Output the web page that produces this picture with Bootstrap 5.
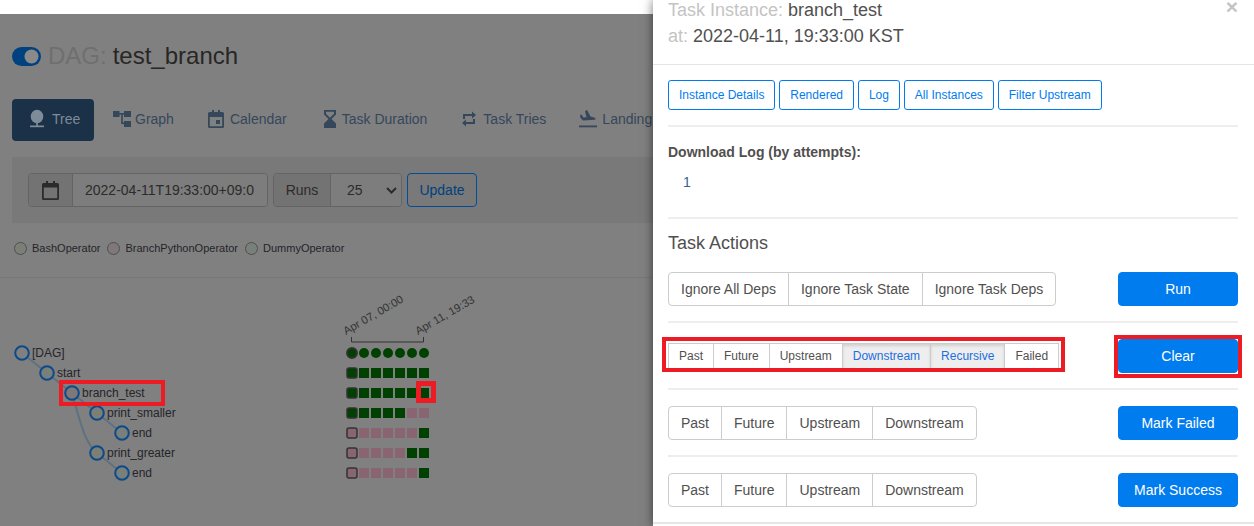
<!DOCTYPE html>
<html lang="en"><head><meta charset="utf-8"><title>test_branch</title>
<link href="https://cdn.jsdelivr.net/npm/bootstrap@5.3.0/dist/css/bootstrap.min.css" rel="stylesheet">
<style>
html,body{margin:0;height:526px;overflow:hidden;background:#fff;font-family:"Liberation Sans",Arial,sans-serif;font-size:14px;color:#51504f}
.shell{display:flex;height:526px;overflow:hidden}
.dimmed{flex:0 0 653px;width:653px;height:526px;overflow:hidden;display:flex;flex-direction:column}
.topstrip{flex:0 0 14px;background:#fff}
.pagearea{flex:1;background:#808080;padding:0 0 0 12px;color:#282726;overflow:hidden}
.dagtitle{display:flex;align-items:center;height:30px;margin:27px 0 0;font-size:24px;font-weight:400;line-height:30px;color:#282726}
.dagtitle .dim{color:#6f6f6f;margin:0 6px 0 7px}
.toggleicon{display:block;width:29px;height:19px;flex:none}
.tabsrow{display:flex;margin-top:28px;height:42px;align-items:stretch;white-space:nowrap}
.tabitem{display:flex;align-items:center;flex:none;color:#35475a;text-decoration:none;padding-bottom:2px}
.tabitem svg{display:block;margin-right:5px;flex:none}
.tabactive{width:82px;background:#1a3148;color:#7e8b98;border-radius:4px;padding-left:15px}
.tabgraph{margin-left:19px}
.tabgraph svg{margin-right:4px}
.tabcal{margin-left:34px}
.tabcal svg,.tabtries svg{margin-right:6px}
.tabdur{margin-left:36px}
.tabtries{margin-left:34px}
.tabland{margin-left:33px}
.filterbar{margin-top:16px;height:66px;background:#797979;padding:16px;display:flex;align-items:center;gap:4px}
.fgroup{display:flex;height:34px;border:1px solid #646464;border-radius:4px;overflow:hidden;color:#2c2b2a;flex:none}
.fgroup>div{display:flex;align-items:center;height:100%}
.fgroup2{margin-left:1px}
.faddon{background:#737373;border-right:1px solid #646464}
.fgroup .fcal{width:44px;justify-content:center}
.fgroup .fval{width:194px;padding-left:12px;background:#7d7d7d;overflow:hidden;white-space:nowrap}
.fgroup .fruns{width:57px;justify-content:center}
.fgroup .fsel{width:70px;padding-left:16px;background:#7d7d7d;justify-content:space-between;padding-right:4px}
.updatebtn{height:34px;width:70px;border:1px solid #014d96;border-radius:4px;background:transparent;color:#00417c;font-size:14px;padding:0;margin-left:1px}
.legendrow{display:flex;align-items:center;height:16px;margin-top:17px;font-size:11px;color:#25242a;margin-left:2px}
.legendrow i{display:block;width:13px;height:13px;border-radius:50%;border:1px solid #4f4f4f;margin-right:5px}
.legendrow span{margin-right:7px}
.pageline{height:1px;background:#787878;margin:21px 0 0 -12px}
.treesvg{display:block;margin:8px 0 0 -12px}
.taskmodal{flex:1;height:auto;border:0;border-radius:0;box-shadow:0 0 10px rgba(0,0,0,.55);background:#fff;z-index:2;position:relative;overflow:hidden;display:block}
.taskhead{display:flow-root;height:65px;padding:0 15px;border-bottom:1px solid #e5e5e5;position:relative;font-size:18px;line-height:26px;color:#51504f}
.taskhead p{margin:0}
.taskhead .t1{margin-top:-3px}
.taskhead .dim{color:#c4c4c4}
.closex{position:absolute;right:16px;top:0;font-size:21px;font-weight:700;color:#c4c4c4;line-height:13px}
.taskbody{padding:15px 16px 0 15px}
.linkbtn{font-size:12px;line-height:18px;padding:5px 10px;color:#017cee;border:1px solid #017cee;border-radius:3px;background:#fff;display:inline-block;text-decoration:none}
.thinrule{height:2px;background:#eee;margin:15px 0 0}
.dlrule{margin-top:25px}
.dlhead{font-weight:700;margin:15px 0 0;line-height:20px;font-size:14px}
.dlnum{margin:10px 0 0 15px;line-height:20px;color:#365f8c;font-size:14px}
.acthead{font-size:18px;line-height:25px;margin:12px 0 0;font-weight:400;color:#51504f}
.actrow{display:flex;justify-content:space-between;align-items:center;height:34px;margin-top:16px}
.actsep{height:2px;background:#eee;margin-top:15px}
.sgroup .btn{font-size:14px;line-height:20px;padding:6px 12px;color:#51504f;background:#fff;border:1px solid #ccc;border-radius:4px}
.sgroup.btn-group .btn:not(:first-child){margin-left:-1px}
.xgroup .btn{font-size:12px;line-height:18px;padding:3px 10px;border-radius:0}
.xgroup .btn.picked{background:#eee;color:#1d6fe0;box-shadow:inset 0 2px 3px rgba(0,0,0,.12)}
.gobtn{width:120px;height:34px;font-size:14px;line-height:20px;padding:6px 0;background:#017cee;border:1px solid #017cee;color:#fff;border-radius:4px}
.redbox{position:absolute;border:4px solid #ed1c24;pointer-events:none}
.redone{left:9px;top:337px;width:403px;height:35px}
.redtwo{left:461px;top:335px;width:128px;height:43px}
.modalfoot{height:2px;background:#e5e5e5;margin:15px -16px 0 -15px}
</style></head>
<body>
<div class="shell">
 <div class="dimmed">
  <div class="topstrip"></div>
  <div class="pagearea">
   <h3 class="dagtitle">
    <svg class="toggleicon" viewBox="0 0 29 19"><rect width="29" height="19" rx="9.5" fill="#00427f"/><circle cx="19.5" cy="9.5" r="7" fill="#8a8a8a"/></svg>
    <span class="dim">DAG:</span>test_branch</h3>
   <div class="tabsrow">
    <a class="tabitem tabactive"><svg width="20" height="20" viewBox="0 0 20 20" fill="#7e8b98"><ellipse cx="10" cy="7.5" rx="6.3" ry="6.8"/><rect x="9.2" y="12" width="1.7" height="5"/><rect x="3" y="16.5" width="14" height="1.7"/></svg>Tree</a>
    <a class="tabitem tabgraph"><svg width="18" height="18" viewBox="0 0 18 18" fill="#35475a"><rect x="0" y="1" width="6.5" height="6"/><rect x="11" y="1" width="7" height="6"/><rect x="11" y="11" width="7" height="6"/><rect x="6" y="3" width="6" height="1.6"/><rect x="8.2" y="3" width="1.6" height="11"/><rect x="8.2" y="12.5" width="4" height="1.6"/></svg>Graph</a>
    <a class="tabitem tabcal"><svg width="16" height="20" viewBox="0 0 16 20" fill="#35475a"><path d="M1.500 3H4V1h2v2h4V1h2v2h2.500A1.500 1.500 0 0 1 16 4.500v13a1.500 1.500 0 0 1-1.500 1.500h-13A1.500 1.500 0 0 1 0 17.500v-13A1.500 1.500 0 0 1 1.500 3Zm.3 5v9.200h12.400V8Z"/><rect x="8" y="11" width="4" height="4"/></svg>Calendar</a>
    <a class="tabitem tabdur"><svg width="14" height="20" viewBox="0 0 14 20" fill="#35475a"><path d="M1 1h12v4.500L8.500 10 13 14.500V19H1v-4.500L5.500 10 1 5.500Zm2 1.800v1.900L7 8.700l4-4V2.800Z"/></svg>Task Duration</a>
    <a class="tabitem tabtries"><svg width="16" height="18" viewBox="0 0 16 18" fill="#35475a"><path d="M2 4h9V1.500L15 5l-4 3.500V6H4v3H2ZM14 14H5v2.500L1 13l4-3.500V12h7V9h2Z"/></svg>Task Tries</a>
    <a class="tabitem tabland"><svg width="18" height="18" viewBox="0 0 18 18" fill="#35475a"><rect x="0" y="15.500" width="18" height="1.800"/><path d="M1 5l1.500-.5 2 3 3-.2L6 1.300 8-.1l3.500 6.700 4.300 1.200c1 .4 1 1.800-.3 2L4 10.500 1.500 8Z"/></svg>Landing</a>
   </div>
   <div class="filterbar">
    <div class="fgroup"><div class="faddon fcal"><svg width="17" height="19" viewBox="0 0 17 19" fill="#2c2b2a"><path d="M1.500 2H4V0h2v2h5V0h2v2h2.500A1.500 1.500 0 0 1 17 3.500v14a1.500 1.500 0 0 1-1.500 1.500h-14A1.500 1.500 0 0 1 0 17.500v-14A1.500 1.500 0 0 1 1.500 2Zm.3 4.500v10.700h13.400V6.500Z"/></svg></div><div class="fval">2022-04-11T19:33:00+09:0</div></div>
    <div class="fgroup fgroup2"><div class="faddon fruns">Runs</div><div class="fsel"><span>25</span><svg width="11" height="7" viewBox="0 0 11 7" fill="none" stroke="#2c2b2a" stroke-width="2"><path d="M1 1l4.500 4.500L10 1"/></svg></div></div>
    <button type="button" class="updatebtn">Update</button>
   </div>
   <div class="legendrow"><i style="background:#7b7f76"></i><span>BashOperator</span><i style="background:#80777a"></i><span>BranchPythonOperator</span><i style="background:#77807a"></i><span>DummyOperator</span></div>
   <div class="pageline"></div>
   <svg class="treesvg" width="653" height="240" viewBox="0 286 653 240" font-family="'Liberation Sans',Arial,sans-serif" font-size="12" fill="#25242a">
    <g fill="none" stroke="#5f7180" stroke-width="2">
     <path d="M22 353 47 373 72 393 97 413 122 433"/><path d="M72 393C80 420 84 442 97 453L122 473"/>
    </g>
    <g stroke="#0d4a8a" stroke-width="2">
     <circle cx="22" cy="353" r="6.800" fill="#808080"/><circle cx="47" cy="373" r="6.800" fill="#77807a"/><circle cx="72" cy="393" r="6.800" fill="#80777a"/><circle cx="97" cy="413" r="6.800" fill="#7b7f76"/><circle cx="122" cy="433" r="6.800" fill="#77807a"/><circle cx="97" cy="453" r="6.800" fill="#7b7f76"/><circle cx="122" cy="473" r="6.800" fill="#77807a"/>
    </g>
    <text x="32" y="357">[DAG]</text><text x="57" y="377">start</text><text x="82" y="397">branch_test</text><text x="107" y="417">print_smaller</text><text x="132" y="437">end</text><text x="107" y="457">print_greater</text><text x="132" y="477">end</text>
    <rect x="61" y="382" width="102" height="22" fill="none" stroke="#ed1c24" stroke-width="4"/>
    <g fill="#333" font-size="11.200"><text transform="translate(346 335) rotate(-30)">Apr 07, 00:00</text><text transform="translate(418 335) rotate(-30)">Apr 11, 19:33</text></g>
    <path d="M351.500 337v5h72v-5" fill="none" stroke="#333" stroke-width="1"/>
    <g fill="#004000">
     <circle cx="352" cy="353" r="5" stroke="#333" stroke-width="2"/><circle cx="364" cy="353" r="5"/><circle cx="376" cy="353" r="5"/><circle cx="388" cy="353" r="5"/><circle cx="400" cy="353" r="5"/><circle cx="412" cy="353" r="5"/><circle cx="424" cy="353" r="5"/>
     <rect x="347" y="368" width="10" height="10" rx="2" stroke="#333" stroke-width="1.500"/><rect x="359" y="368" width="10" height="10"/><rect x="371" y="368" width="10" height="10"/><rect x="383" y="368" width="10" height="10"/><rect x="395" y="368" width="10" height="10"/><rect x="407" y="368" width="10" height="10"/><rect x="419" y="368" width="10" height="10"/>
     <rect x="347" y="388" width="10" height="10" rx="2" stroke="#333" stroke-width="1.500"/><rect x="359" y="388" width="10" height="10"/><rect x="371" y="388" width="10" height="10"/><rect x="383" y="388" width="10" height="10"/><rect x="395" y="388" width="10" height="10"/><rect x="407" y="388" width="10" height="10"/><rect x="419" y="388" width="10" height="10"/>
     <rect x="347" y="408" width="10" height="10" rx="2" stroke="#333" stroke-width="1.500"/><rect x="359" y="408" width="10" height="10"/><rect x="371" y="408" width="10" height="10"/><rect x="383" y="408" width="10" height="10"/><rect x="395" y="408" width="10" height="10"/>
     <rect x="419" y="428" width="10" height="10"/><rect x="407" y="448" width="10" height="10"/><rect x="419" y="448" width="10" height="10"/><rect x="419" y="468" width="10" height="10"/>
    </g>
    <g fill="#886570">
     <rect x="407" y="408" width="10" height="10"/><rect x="419" y="408" width="10" height="10"/>
     <rect x="347" y="428" width="10" height="10" rx="2" stroke="#333" stroke-width="1.500"/><rect x="359" y="428" width="10" height="10"/><rect x="371" y="428" width="10" height="10"/><rect x="383" y="428" width="10" height="10"/><rect x="395" y="428" width="10" height="10"/><rect x="407" y="428" width="10" height="10"/>
     <rect x="347" y="448" width="10" height="10" rx="2" stroke="#333" stroke-width="1.500"/><rect x="359" y="448" width="10" height="10"/><rect x="371" y="448" width="10" height="10"/><rect x="383" y="448" width="10" height="10"/><rect x="395" y="448" width="10" height="10"/>
     <rect x="347" y="468" width="10" height="10" rx="2" stroke="#333" stroke-width="1.500"/><rect x="359" y="468" width="10" height="10"/><rect x="371" y="468" width="10" height="10"/><rect x="383" y="468" width="10" height="10"/><rect x="395" y="468" width="10" height="10"/><rect x="407" y="468" width="10" height="10"/>
    </g>
    <rect x="418.500" y="383.500" width="15" height="17" fill="none" stroke="#ed1c24" stroke-width="5"/>
   </svg>
  </div>
 </div>
 <div class="modal-content taskmodal">
  <div class="taskhead">
   <p class="t1"><span class="dim">Task Instance:</span> branch_test</p>
   <p><span class="dim">at:</span> 2022-04-11, 19:33:00 KST</p>
   <span class="closex">×</span>
  </div>
  <div class="taskbody">
   <div>
    <a class="linkbtn">Instance Details</a>
    <a class="linkbtn">Rendered</a>
    <a class="linkbtn">Log</a>
    <a class="linkbtn">All Instances</a>
    <a class="linkbtn">Filter Upstream</a>
   </div>
   <div class="thinrule"></div>
   <p class="dlhead">Download Log (by attempts):</p>
   <p class="dlnum">1</p>
   <div class="thinrule dlrule"></div>
   <h4 class="acthead">Task Actions</h4>
   <div class="actrow"><div class="btn-group sgroup"><button class="btn">Ignore All Deps</button><button class="btn">Ignore Task State</button><button class="btn">Ignore Task Deps</button></div><button class="btn gobtn">Run</button></div>
   <div class="actsep"></div>
   <div class="actrow"><div class="btn-group sgroup xgroup"><button class="btn">Past</button><button class="btn">Future</button><button class="btn">Upstream</button><button class="btn picked">Downstream</button><button class="btn picked">Recursive</button><button class="btn">Failed</button></div><button class="btn gobtn">Clear</button></div>
   <div class="actsep"></div>
   <div class="actrow"><div class="btn-group sgroup"><button class="btn">Past</button><button class="btn">Future</button><button class="btn">Upstream</button><button class="btn">Downstream</button></div><button class="btn gobtn">Mark Failed</button></div>
   <div class="actsep"></div>
   <div class="actrow"><div class="btn-group sgroup"><button class="btn">Past</button><button class="btn">Future</button><button class="btn">Upstream</button><button class="btn">Downstream</button></div><button class="btn gobtn">Mark Success</button></div>
   <div class="modalfoot"></div>
  </div>
  <div class="redbox redone"></div>
  <div class="redbox redtwo"></div>
 </div>
</div>
<script src="https://cdn.jsdelivr.net/npm/bootstrap@5.3.0/dist/js/bootstrap.bundle.min.js"></script>
</body></html>
